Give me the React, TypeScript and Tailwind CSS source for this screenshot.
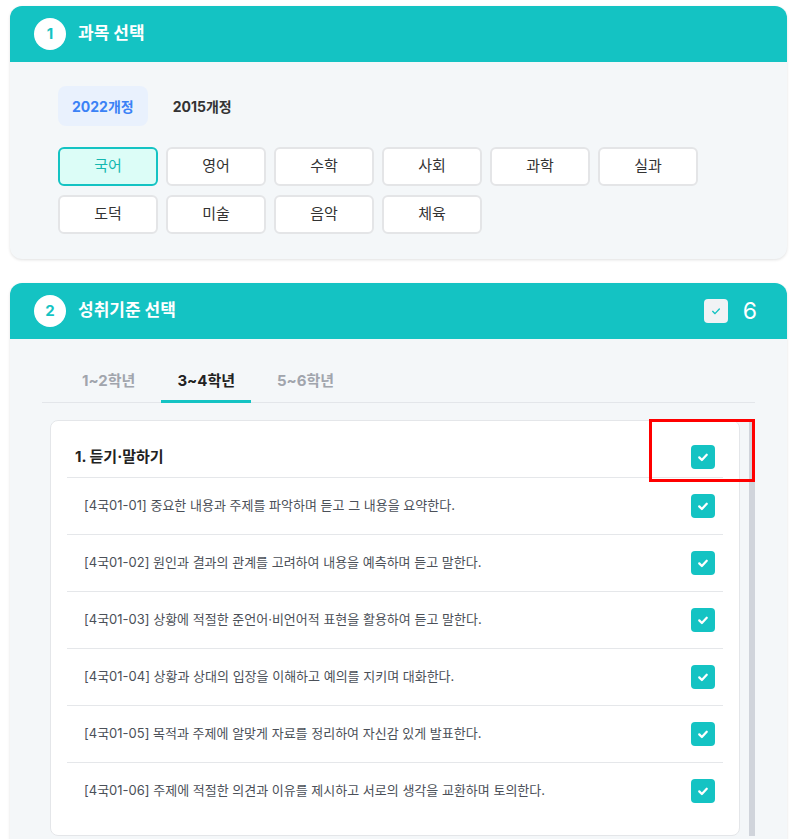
import { useState } from "react";

const SUBJECTS = ["국어", "영어", "수학", "사회", "과학", "실과", "도덕", "미술", "음악", "체육"];

const GRADES = ["1~2학년", "3~4학년", "5~6학년"];

const STANDARDS = [
  "[4국01-01] 중요한 내용과 주제를 파악하며 듣고 그 내용을 요약한다.",
  "[4국01-02] 원인과 결과의 관계를 고려하여 내용을 예측하며 듣고 말한다.",
  "[4국01-03] 상황에 적절한 준언어·비언어적 표현을 활용하여 듣고 말한다.",
  "[4국01-04] 상황과 상대의 입장을 이해하고 예의를 지키며 대화한다.",
  "[4국01-05] 목적과 주제에 알맞게 자료를 정리하여 자신감 있게 발표한다.",
  "[4국01-06] 주제에 적절한 의견과 이유를 제시하고 서로의 생각을 교환하며 토의한다."
];

function Check({ className = "" }: { className?: string }) {
  return (
    <svg viewBox="0 0 24 24" className={className} fill="none" stroke="currentColor" strokeWidth={3} strokeLinecap="round" strokeLinejoin="round">
      <polyline points="7 12.5 10.5 16 17 9" />
    </svg>
  );
}

function TealBox() {
  return (
    <span className="flex h-6 w-6 items-center justify-center rounded-[4px] bg-[#14c3c3] text-white">
      <Check className="h-[18px] w-[18px]" />
    </span>
  );
}

function SectionHeader({ no, title, right }: { no: number; title: string; right?: React.ReactNode }) {
  return (
    <div className="flex h-14 items-center bg-[#14c3c3] pl-6 pr-[30px]">
      <span className="flex h-8 w-8 items-center justify-center rounded-full bg-white text-[15px] font-bold text-[#14c3c3]">
        {no}
      </span>
      <h2 className="ml-3 text-[17px] font-bold text-white">{title}</h2>
      {right && <div className="ml-auto flex items-center">{right}</div>}
    </div>
  );
}

export default function App() {
  const [rev, setRev] = useState("2022");
  const [subject, setSubject] = useState("국어");
  const [grade, setGrade] = useState("3~4학년");

  return (
    <div
      className="min-h-screen bg-white pl-[10px] pr-[17px] pt-[6px] text-[#333]"
      style={{ fontFamily: 'Inter, "Noto Sans CJK KR", sans-serif' }}
    >
      {/* step 1 */}
      <section className="overflow-hidden rounded-xl bg-[#f4f7f9] shadow-[0_1px_3px_rgba(0,0,0,0.12)]">
        <SectionHeader no={1} title="과목 선택" />
        <div className="px-12 pb-[25px] pt-6">
          <div className="flex gap-[11px]">
            {["2022", "2015"].map((r) => (
              <button
                key={r}
                type="button"
                onClick={() => setRev(r)}
                className={`h-10 rounded-lg px-[14px] text-[14px] font-bold ${
                  rev === r ? "bg-[#e9f1fd] text-[#3b82f6]" : "text-[#333]"
                }`}
              >
                {r}개정
              </button>
            ))}
          </div>
          <div className="mt-[21px] flex w-[640px] flex-wrap gap-x-2 gap-y-[9px]">
            {SUBJECTS.map((s) => (
              <button
                key={s}
                type="button"
                onClick={() => setSubject(s)}
                className={`h-[39px] w-[100px] rounded-md border-2 text-[15px] ${
                  subject === s
                    ? "border-[#14c3c3] bg-[#dcfdf7] text-[#14b8b0]"
                    : "border-[#e4e5e7] bg-white text-[#333]"
                }`}
              >
                {s}
              </button>
            ))}
          </div>
        </div>
      </section>

      {/* step 2 */}
      <section className="mt-6 overflow-hidden rounded-xl bg-[#f4f7f9] shadow-[0_1px_3px_rgba(0,0,0,0.12)]">
        <SectionHeader
          no={2}
          title="성취기준 선택"
          right={
            <>
              <span className="flex h-6 w-6 items-center justify-center rounded-[4px] bg-[#f1f3f5] text-[#14c3c3]">
                <Check className="h-4 w-4 [stroke-width:2]" />
              </span>
              <span className="ml-[15px] text-[23px] leading-none text-white">6</span>
            </>
          }
        />
        <div className="px-8 pt-[18px]">
          <div className="flex gap-[10px] border-b border-[#e3e6ea] pl-6">
            {GRADES.map((g) => (
              <button
                key={g}
                type="button"
                onClick={() => setGrade(g)}
                className={`-mb-px border-b-[3px] px-4 pb-2 pt-[13px] text-[15px] font-bold leading-[22px] ${
                  grade === g ? "border-[#14c3c3] text-[#222]" : "border-transparent text-[#a1a5ad]"
                }`}
              >
                {g}
              </button>
            ))}
          </div>

          <div className="mt-[17px] flex gap-[9px] pl-2">
            <div className="flex-1 rounded-lg border border-[#e4e6e9] bg-white px-4 pb-4 pt-4">
              <div className="flex h-10 items-center justify-between px-2">
                <span className="text-[15px] font-bold text-[#222]">1. 듣기·말하기</span>
                <TealBox />
              </div>
              {STANDARDS.map((t) => (
                <div key={t} className="flex h-[57px] items-center justify-between border-t border-[#e5e7ea] pl-[17px] pr-2">
                  <span className="text-[13px] text-[#4b5058]">{t}</span>
                  <TealBox />
                </div>
              ))}
            </div>
            <div className="w-[6px] bg-[#d0d4db]" />
          </div>
          <div className="h-6" />
        </div>
      </section>

      {/* highlight annotation */}
      <div className="pointer-events-none absolute left-[649px] top-[419px] h-[63px] w-[106px] border-[3px] border-[#ff0000]" />
    </div>
  );
}
